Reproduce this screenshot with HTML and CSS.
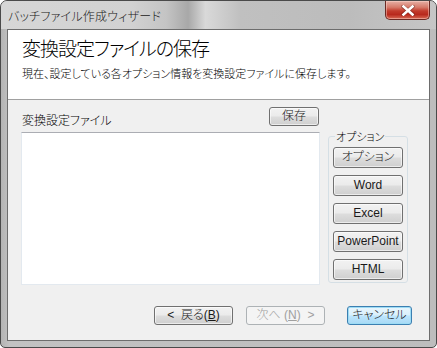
FILE: index.html
```html
<!DOCTYPE html>
<html lang="ja">
<head>
    <meta charset="UTF-8">
    <title>バッチファイル作成ウィザード</title>
    <link rel="stylesheet" href="styles.css">
</head>
<body>
    <div class="window">
        <div class="titlebar">
            <span class="title">バッチファイル作成ウィザード</span>
            <div class="close-btn">
                <svg width="14" height="11" viewBox="0 0 14 11">
                    <path d="M2 1.5 L12 9.5 M12 1.5 L2 9.5" stroke="#5a1a14" stroke-width="3.6" stroke-linecap="round" opacity="0.5"/>
                    <path d="M2.5 1.5 L11.5 9.5 M11.5 1.5 L2.5 9.5" stroke="#ffffff" stroke-width="2.6" stroke-linecap="square"/>
                </svg>
            </div>
        </div>

        <div class="client">
            <!-- Header -->
            <div class="header">
                <h1>変換設定ファイルの保存</h1>
                <p>現在、設定している各オプション情報を変換設定ファイルに保存します。</p>
            </div>

            <!-- Main content -->
            <div class="content">
                <div class="file-col">
                    <div class="file-head">
                        <span class="label">変換設定ファイル</span>
                        <button class="btn btn-save">保存</button>
                    </div>
                    <div class="file-list"></div>
                </div>

                <fieldset class="options">
                    <legend>オプション</legend>
                    <button class="btn">オプション</button>
                    <button class="btn">Word</button>
                    <button class="btn">Excel</button>
                    <button class="btn">PowerPoint</button>
                    <button class="btn">HTML</button>
                </fieldset>
            </div>

            <!-- Wizard buttons -->
            <div class="footer">
                <button class="btn btn-nav">&lt;&nbsp; 戻る(<u>B</u>)</button>
                <button class="btn btn-nav" disabled>次へ (<u>N</u>)&nbsp; &gt;</button>
                <button class="btn btn-cancel">キャンセル</button>
            </div>
        </div>
    </div>
</body>
</html>
```

FILE: styles.css
```css
* {
    margin: 0;
    padding: 0;
    box-sizing: border-box;
}

body {
    font-family: "Noto Sans CJK JP", sans-serif;
    font-feature-settings: "palt";
    font-weight: 300;
    font-size: 12px;
    color: #000;
    background: #fff;
}

/* Window frame */
.window {
    width: 437px;
    height: 348px;
    border: 1px solid #4a4a4a;
    border-radius: 7px 7px 5px 5px;
    background: linear-gradient(90deg, #b4b4b4 0%, #c2c2c2 2%, #bdbdbd 100%);
    display: flex;
    flex-direction: column;
    padding: 0 6px 6px;
    overflow: hidden;
}

.titlebar {
    height: 28px;
    margin: 0 -6px;
    padding-left: 7px;
    display: flex;
    align-items: center;
    justify-content: space-between;
    background: linear-gradient(90deg, #d6d6d6 0%, #d2d2d2 30%, #c4c4c4 38%, #a8a8a8 43%, #d9d9d9 47%, #c0c0c0 55%, #bcbcbc 80%, #c6c6c6 100%);
}

.title {
    font-size: 12px;
    color: #202020;
    letter-spacing: 0.2px;
}

.close-btn {
    align-self: flex-start;
    width: 45px;
    height: 19px;
    margin-right: 6px;
    border: 1px solid #6b2a24;
    border-top: none;
    border-radius: 0 0 5px 5px;
    background: linear-gradient(180deg, #e6b0a6 0%, #d67a6a 35%, #c23b2c 55%, #b8291d 75%, #d86a55 100%);
    box-shadow: inset 0 0 0 1px rgba(255, 220, 210, 0.45);
    display: flex;
    align-items: center;
    justify-content: center;
}

/* Client area */
.client {
    flex: 1;
    border: 1px solid #6d6d6d;
    background: #f0f0f0;
    display: flex;
    flex-direction: column;
}

.header {
    height: 70px;
    background: #fff;
    border-bottom: 1px solid #a0a0a0;
    padding: 5px 0 0 14px;
}

.header h1 {
    font-size: 19px;
    font-weight: 300;
    line-height: 26px;
    letter-spacing: -1px;
}

.header p {
    margin-top: 4px;
    line-height: 16px;
    font-size: 11px;
}

.content {
    display: flex;
    padding: 7px 0 0 13px;
}

.file-col {
    width: 299px;
}

.file-head {
    display: flex;
    justify-content: space-between;
    height: 19px;
    padding-right: 1px;
}

.label {
    padding-top: 5px;
    line-height: 16px;
    padding-left: 1px;
}

.file-list {
    margin-top: 6px;
    height: 153px;
    background: #fff;
    border: 1px solid #e3e9ef;
    border-top-color: #abadb3;
}

/* Buttons */
.btn {
    font-family: "Liberation Sans", "Noto Sans CJK JP", sans-serif;
    font-feature-settings: "palt";
    font-weight: 300;
    font-size: 12px;
    color: #1a1a1a;
    height: 19px;
    border: 1px solid #707070;
    border-radius: 3px;
    background: linear-gradient(180deg, #f2f2f2 0%, #ebebeb 48%, #dddddd 52%, #cfcfcf 100%);
    box-shadow: inset 0 0 0 1px rgba(255, 255, 255, 0.6);
    line-height: 15px;
    cursor: pointer;
}

.btn u {
    text-decoration: underline;
}

.btn-save {
    width: 50px;
}

.options {
    margin: 23px 0 0 8px;
    width: 80px;
    height: 153px;
    border: 1px solid #d5dfe5;
    border-radius: 3px;
    padding: 4px 0 0 4px;
    display: flex;
    flex-direction: column;
    gap: 7px;
}

.options legend {
    line-height: 13px;
    padding: 0 1px;
    margin-left: 2px;
    font-size: 11px;
}

.options .btn {
    width: 70px;
    height: 21px;
}

.footer {
    margin-top: auto;
    display: flex;
    justify-content: flex-end;
    padding: 0 17px 15px 0;
}

.btn-nav {
    width: 79px;
    margin-right: 13px;
}

.btn-nav:disabled {
    margin-right: 22px;
    color: #a0a0a0;
    border-color: #adb2b5;
    background: #f4f4f4;
    box-shadow: none;
}

.btn-cancel {
    width: 65px;
    border-color: #3c7fb1;
    background: linear-gradient(180deg, #eaf6fd 0%, #d9f0fc 48%, #bee6fd 52%, #a7d9f5 100%);
    box-shadow: inset 0 0 0 1px #9ddcf5;
}
```
